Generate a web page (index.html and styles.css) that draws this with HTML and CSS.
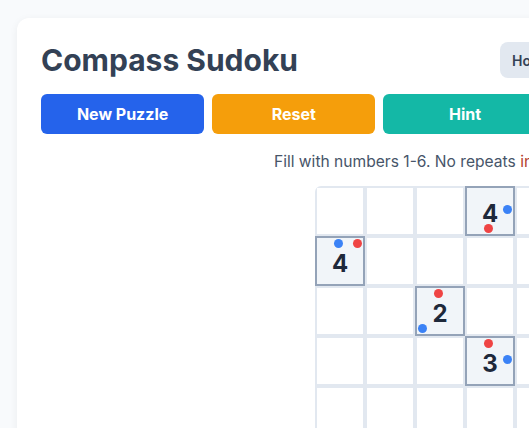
FILE: index.html
```html
<!DOCTYPE html>
<html lang="en">
<head>
    <meta charset="UTF-8">
    <meta name="viewport" content="width=device-width, initial-scale=1.0">
    <title>Compass Sudoku</title>
    <link rel="stylesheet" href="styles.css">
</head>
<body>
    <div class="card">
        <div class="header">
            <h1>Compass Sudoku</h1>
            <button class="help-btn">How to Play</button>
        </div>

        <div class="controls">
            <button class="btn btn-new">New Puzzle</button>
            <button class="btn btn-reset">Reset</button>
            <button class="btn btn-hint">Hint</button>
            <button class="btn btn-check">Check</button>
            <button class="btn btn-solve">Solve</button>
        </div>

        <p class="rules">Fill with numbers 1-6. No repeats <span class="rules-em">in rows or columns.</span></p>

        <div class="board">
            <div class="cell"></div>
            <div class="cell"></div>
            <div class="cell"></div>
            <div class="cell clue">4<span class="dot blue e"></span><span class="dot red s"></span></div>
            <div class="cell"></div>
            <div class="cell"></div>

            <div class="cell clue">4<span class="dot blue n"></span><span class="dot red ne"></span></div>
            <div class="cell"></div>
            <div class="cell"></div>
            <div class="cell"></div>
            <div class="cell"></div>
            <div class="cell"></div>

            <div class="cell"></div>
            <div class="cell"></div>
            <div class="cell clue">2<span class="dot red n"></span><span class="dot blue sw"></span></div>
            <div class="cell"></div>
            <div class="cell"></div>
            <div class="cell"></div>

            <div class="cell"></div>
            <div class="cell"></div>
            <div class="cell"></div>
            <div class="cell clue">3<span class="dot red n"></span><span class="dot blue e"></span></div>
            <div class="cell"></div>
            <div class="cell"></div>

            <div class="cell"></div>
            <div class="cell"></div>
            <div class="cell"></div>
            <div class="cell"></div>
            <div class="cell"></div>
            <div class="cell"></div>

            <div class="cell"></div>
            <div class="cell"></div>
            <div class="cell"></div>
            <div class="cell"></div>
            <div class="cell"></div>
            <div class="cell"></div>
        </div>
    </div>
</body>
</html>
```

FILE: styles.css
```css
html {
    overflow: hidden;
}
body {
    font-family: Inter, "Noto Sans", sans-serif;
    background-color: #f8fafc;
    margin: 0;
    padding: 18px 17px;
}
.card {
    background: white;
    border-radius: 12px;
    box-shadow: 0 2px 8px rgba(15, 23, 42, 0.06);
    width: 848px;
    padding: 24px;
}
.header {
    display: flex;
    align-items: center;
    height: 36px;
    margin-bottom: 16px;
}
h1 {
    flex: 0 0 459px;
    margin: 0;
    font-size: 30px;
    font-weight: 700;
    line-height: 36px;
    color: #334155;
}
.help-btn {
    height: 36px;
    padding: 0 12px;
    border: none;
    border-radius: 8px;
    background-color: #e2e8f0;
    color: #334155;
    font-family: inherit;
    font-size: 14px;
    font-weight: 600;
}
.controls {
    display: flex;
    gap: 8px;
}
.btn {
    flex: 1;
    height: 40px;
    border: none;
    border-radius: 6px;
    color: white;
    font-family: inherit;
    font-size: 16px;
    font-weight: 700;
    cursor: pointer;
}
.btn-new { background-color: #2563eb; }
.btn-reset { background-color: #f59e0b; }
.btn-hint { background-color: #14b8a6; }
.btn-check { background-color: #8b5cf6; }
.btn-solve { background-color: #ef4444; }

.rules {
    margin: 16px 0 12px;
    padding-left: 8px;
    font-size: 15.6px;
    line-height: 24px;
    color: #475569;
    text-align: center;
}
.rules-em {
    color: #b4412e;
}
.board {
    display: grid;
    grid-template-columns: repeat(6, 50px);
    width: 300px;
    margin: 0 auto;
    border-radius: 6px;
    overflow: hidden;
}
.cell {
    position: relative;
    box-sizing: border-box;
    height: 50px;
    border: 2px solid #e2e8f0;
    background: white;
    display: flex;
    justify-content: center;
    align-items: center;
    padding-top: 5px;
    font-size: 24px;
    font-weight: 700;
    color: #1e293b;
}
.cell.clue {
    border-color: #94a3b8;
    background-color: #f1f5f9;
}
.dot {
    position: absolute;
    width: 9px;
    height: 9px;
    border-radius: 50%;
}
.dot.red { background-color: #ef4444; }
.dot.blue { background-color: #3b82f6; }
.dot.n { top: 1px; left: 16.5px; }
.dot.ne { top: 1px; right: 1px; }
.dot.e { top: 16.5px; right: 1px; }
.dot.s { bottom: 1px; left: 16.5px; }
.dot.sw { bottom: 1px; left: 1px; }
```
